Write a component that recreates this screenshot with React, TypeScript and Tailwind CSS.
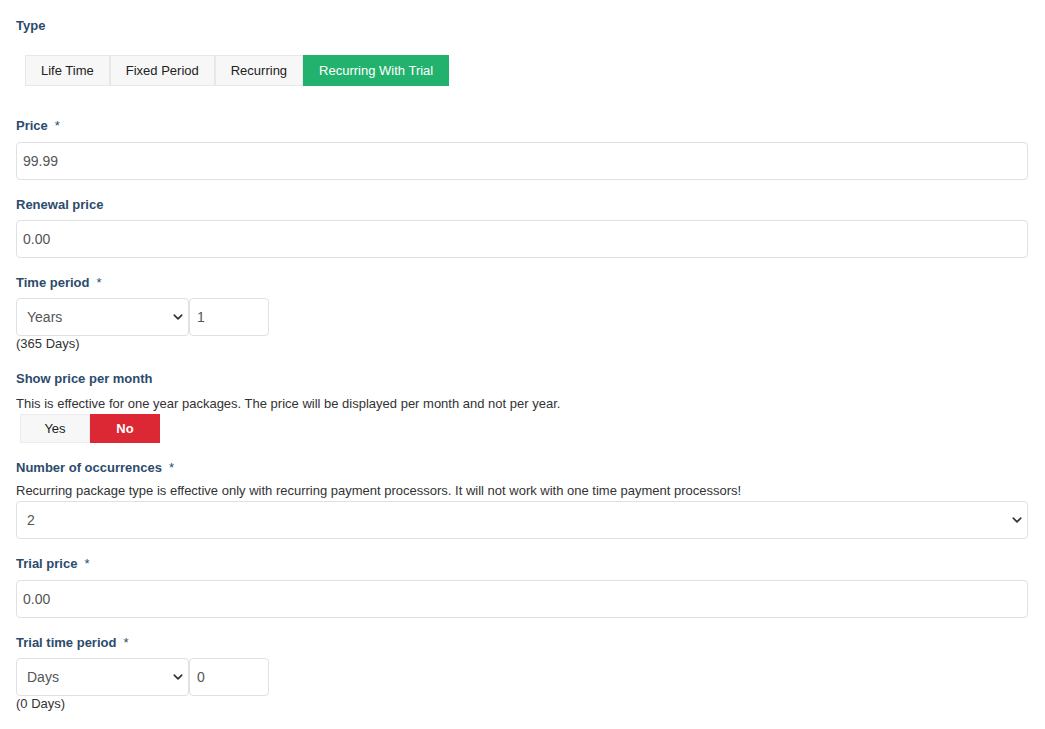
import React from 'react'

const font = { fontFamily: '"Liberation Sans", Arial, sans-serif' }

const Chevron = () => (
    <svg width="10" height="10" viewBox="0 0 16 16" className="text-[#333]">
        <path d="M2 5l6 6 6-6" fill="none" stroke="currentColor" strokeWidth="2.6" strokeLinecap="round" strokeLinejoin="round" />
    </svg>
)

const Label: React.FC<{ text: string; required?: boolean; className?: string }> = ({ text, required, className }) => (
    <div className={`pt-px text-[13px] leading-[18px] font-bold text-[#2c4b6c] ${className ?? ''}`}>
        {text}
        {required && <span className="ml-[7px] font-normal">*</span>}
    </div>
)

const TextInput: React.FC<{ value: string; className?: string }> = ({ value, className }) => (
    <div
        className={`h-[38px] flex items-center border border-[#dfe1e5] rounded-[4px] bg-white pl-[6px] text-[14px] text-[#555] ${className ?? ''}`}
    >
        {value}
    </div>
)

const SelectBox: React.FC<{ value: string; className?: string }> = ({ value, className }) => (
    <div
        className={`h-[38px] flex items-center justify-between border border-[#dfe1e5] rounded-[4px] bg-white pl-[10px] pr-[5px] text-[14px] text-[#555] ${className ?? ''}`}
    >
        <span>{value}</span>
        <Chevron />
    </div>
)

const typeItems = ['Life Time', 'Fixed Period', 'Recurring', 'Recurring With Trial']

export default function App() {
    const [type, setType] = React.useState('Recurring With Trial')
    const [perMonth, setPerMonth] = React.useState(false)

    return (
        <div className="w-[1045px] min-h-[729px] bg-white pl-[16px] pr-[17px] pt-[16px]" style={font}>
            <Label text="Type" />
            <div className="flex ml-[9px] mt-[20px]">
                {typeItems.map((item) => (
                    <button
                        key={item}
                        type="button"
                        onClick={() => setType(item)}
                        className={`h-[31px] px-[15px] text-[13px] border ${
                            type === item
                                ? 'bg-[#23b26d] border-[#23b26d] text-white'
                                : 'bg-[#f7f7f7] border-[#e8e8e8] text-[#222]'
                        }`}
                    >
                        {item}
                    </button>
                ))}
            </div>

            <Label text="Price" required className="mt-[30px]" />
            <TextInput value="99.99" className="mt-[7px]" />

            <Label text="Renewal price" className="mt-[15px]" />
            <TextInput value="0.00" className="mt-[6px]" />

            <Label text="Time period" required className="mt-[15px]" />
            <div className="flex mt-[6px]">
                <SelectBox value="Years" className="w-[173px]" />
                <TextInput value="1" className="w-[80px] pl-[7px]" />
            </div>
            <div className="text-[13px] leading-[16px] text-[#333]">(365 Days)</div>

            <Label text="Show price per month" className="mt-[17px]" />
            <div className="mt-[7px] text-[13px] leading-[18px] text-[#333]">
                This is effective for one year packages. The price will be displayed per month and not per year.
            </div>
            <div className="flex ml-[4px] mt-[1px]">
                <button
                    type="button"
                    onClick={() => setPerMonth(true)}
                    className={`w-[70px] h-[29px] text-[13px] border ${
                        perMonth ? 'bg-[#23b26d] border-[#23b26d] text-white font-bold' : 'bg-[#f7f7f7] border-[#ececec] text-[#222]'
                    }`}
                >
                    Yes
                </button>
                <button
                    type="button"
                    onClick={() => setPerMonth(false)}
                    className={`w-[70px] h-[29px] text-[13px] border ${
                        !perMonth ? 'bg-[#dc2735] border-[#dc2735] text-white font-bold' : 'bg-[#f7f7f7] border-[#ececec] text-[#222]'
                    }`}
                >
                    No
                </button>
            </div>

            <Label text="Number of occurrences" required className="mt-[15px]" />
            <div className="mt-[5px] text-[13px] leading-[18px] text-[#333]">
                Recurring package type is effective only with recurring payment processors. It will not work with one time payment processors!
            </div>
            <SelectBox value="2" className="mt-[1px] pr-[4px]" />

            <Label text="Trial price" required className="mt-[15px]" />
            <TextInput value="0.00" className="mt-[7px]" />

            <Label text="Trial time period" required className="mt-[15px]" />
            <div className="flex mt-[6px]">
                <SelectBox value="Days" className="w-[173px]" />
                <TextInput value="0" className="w-[80px] pl-[7px]" />
            </div>
            <div className="text-[13px] leading-[16px] text-[#333]">(0 Days)</div>
        </div>
    )
}
